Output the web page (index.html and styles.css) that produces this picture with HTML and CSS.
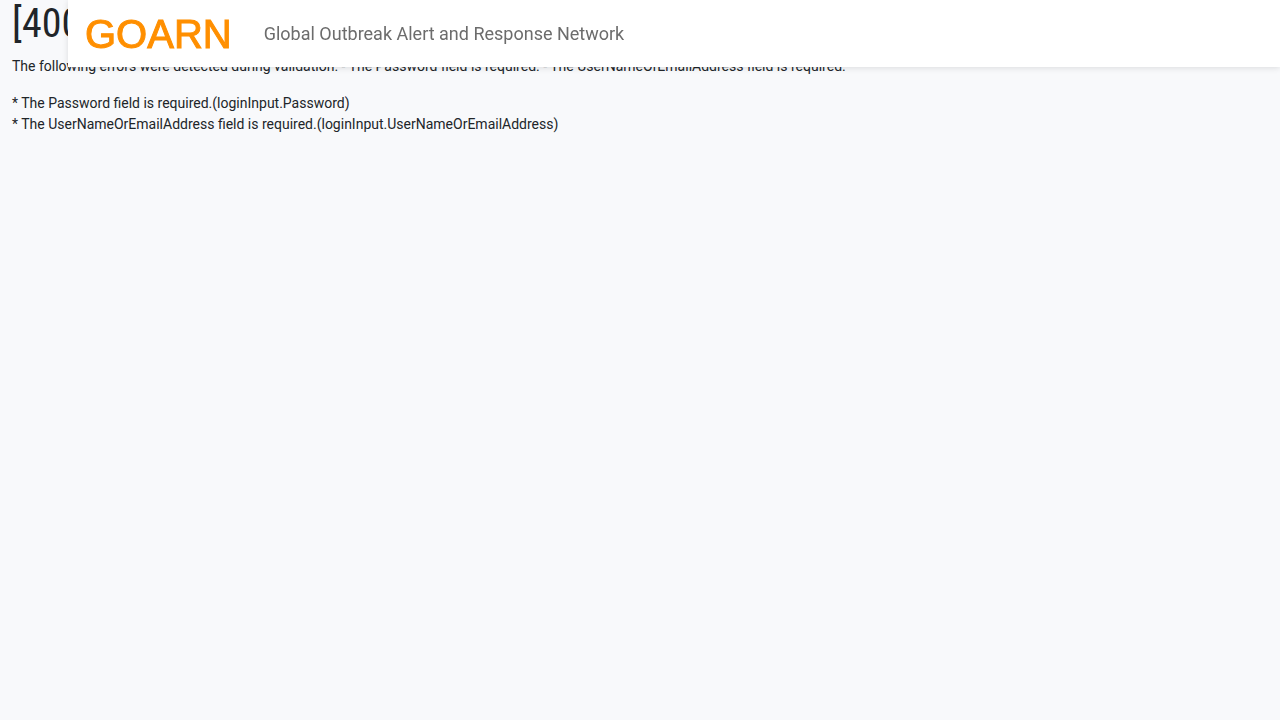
FILE: index.html
```html
<!DOCTYPE html>
<html lang="en">
<head>
<meta charset="utf-8">
<title>GOARN</title>
<link rel="stylesheet" href="styles.css">
</head>
<body>
<header class="topbar">
  <a class="brand" href="#">GOARN</a>
  <span class="tagline">Global Outbreak Alert and Response Network</span>
</header>
<main class="error">
  <h1 class="error-title">[400</h1>
  <p class="error-message">The following errors were detected during validation. - The Password field is required. - The UserNameOrEmailAddress field is required.</p>
  <p class="error-details">* The Password field is required.(loginInput.Password)<br>* The UserNameOrEmailAddress field is required.(loginInput.UserNameOrEmailAddress)</p>
</main>
</body>
</html>
```

FILE: styles.css
```css
* { box-sizing: border-box; }
body {
  margin: 0;
  background: #f8f9fb;
  color: #212529;
  font: 14px/21px Roboto, sans-serif;
}
.topbar {
  position: fixed;
  top: 0;
  left: 68px;
  right: 0;
  height: 67px;
  display: flex;
  align-items: center;
  gap: 32px;
  padding: 0 17px;
  background: #fff;
  box-shadow: 0 1px 6px rgba(0, 0, 0, 0.12);
}
.brand {
  color: #ff8f00;
  font: 40px/48px "Liberation Sans", Arial, sans-serif;
  text-decoration: none;
  -webkit-text-stroke: 1px #ff8f00;
}
.tagline {
  color: #6c6c6c;
  font-size: 18px;
  font-weight: 400;
}
.error { padding: 0 12px; }
.error-title {
  margin: 0 0 8px;
  font-family: "Roboto Condensed", Roboto, sans-serif;
  font-size: 40px;
  font-weight: 400;
  line-height: 48px;
}
.error-message { margin: 0 0 16px; }
.error-details { margin: 0; }
```
